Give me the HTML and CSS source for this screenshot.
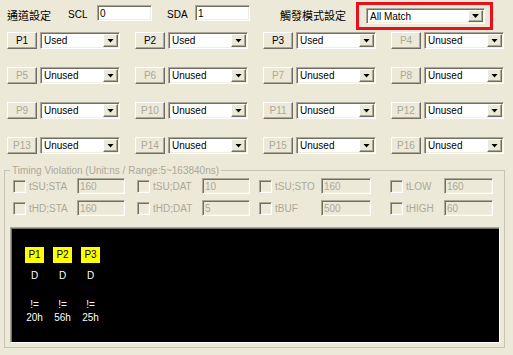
FILE: index.html
```html
<!DOCTYPE html>
<html lang="zh-Hant">
<head>
    <meta charset="UTF-8">
    <title>I2C 觸發設定</title>
    <link rel="stylesheet" href="styles.css">
</head>
<body>
<div class="dlg">
    <!-- ligne du haut : canaux + mode -->
    <div class="top-row">
        <span class="lbl cjk chan-lbl">通道設定</span>
        <span class="lbl scl-lbl">SCL</span>
        <input class="txt" type="text" value="0">
        <span class="lbl sda-lbl">SDA</span>
        <input class="txt" type="text" value="1">
        <span class="lbl cjk mode-lbl">觸發模式設定</span>
        <div class="hilite">
            <div class="combo wide"><span class="val">All Match</span><span class="drop"><i class="tri"></i></span></div>
        </div>
    </div>

    <div class="ports">
        <div class="port"><button class="btn">P1</button><div class="combo"><span class="val">Used</span><span class="drop"><i class="tri"></i></span></div></div>
        <div class="port"><button class="btn">P2</button><div class="combo"><span class="val">Used</span><span class="drop"><i class="tri"></i></span></div></div>
        <div class="port"><button class="btn">P3</button><div class="combo"><span class="val">Used</span><span class="drop"><i class="tri"></i></span></div></div>
        <div class="port"><button class="btn" disabled>P4</button><div class="combo"><span class="val">Unused</span><span class="drop"><i class="tri"></i></span></div></div>
        <div class="port"><button class="btn" disabled>P5</button><div class="combo"><span class="val">Unused</span><span class="drop"><i class="tri"></i></span></div></div>
        <div class="port"><button class="btn" disabled>P6</button><div class="combo"><span class="val">Unused</span><span class="drop"><i class="tri"></i></span></div></div>
        <div class="port"><button class="btn" disabled>P7</button><div class="combo"><span class="val">Unused</span><span class="drop"><i class="tri"></i></span></div></div>
        <div class="port"><button class="btn" disabled>P8</button><div class="combo"><span class="val">Unused</span><span class="drop"><i class="tri"></i></span></div></div>
        <div class="port"><button class="btn" disabled>P9</button><div class="combo"><span class="val">Unused</span><span class="drop"><i class="tri"></i></span></div></div>
        <div class="port"><button class="btn" disabled>P10</button><div class="combo"><span class="val">Unused</span><span class="drop"><i class="tri"></i></span></div></div>
        <div class="port"><button class="btn" disabled>P11</button><div class="combo"><span class="val">Unused</span><span class="drop"><i class="tri"></i></span></div></div>
        <div class="port"><button class="btn" disabled>P12</button><div class="combo"><span class="val">Unused</span><span class="drop"><i class="tri"></i></span></div></div>
        <div class="port"><button class="btn" disabled>P13</button><div class="combo"><span class="val">Unused</span><span class="drop"><i class="tri"></i></span></div></div>
        <div class="port"><button class="btn" disabled>P14</button><div class="combo"><span class="val">Unused</span><span class="drop"><i class="tri"></i></span></div></div>
        <div class="port"><button class="btn" disabled>P15</button><div class="combo"><span class="val">Unused</span><span class="drop"><i class="tri"></i></span></div></div>
        <div class="port"><button class="btn" disabled>P16</button><div class="combo"><span class="val">Unused</span><span class="drop"><i class="tri"></i></span></div></div>
    </div>

    <fieldset class="group">
        <legend>Timing Violation (Unit:ns / Range:5~163840ns)</legend>
        <div class="checks">
            <div class="chk-cell col-a"><span class="chk"></span><span class="chk-lbl">tSU;STA</span><input class="txt off" type="text" value="160" disabled></div>
            <div class="chk-cell col-b"><span class="chk"></span><span class="chk-lbl">tSU;DAT</span><input class="txt off" type="text" value="10" disabled></div>
            <div class="chk-cell col-c"><span class="chk"></span><span class="chk-lbl">tSU;STO</span><input class="txt off" type="text" value="160" disabled></div>
            <div class="chk-cell col-d"><span class="chk"></span><span class="chk-lbl">tLOW</span><input class="txt off" type="text" value="160" disabled></div>
            <div class="chk-cell col-a"><span class="chk"></span><span class="chk-lbl">tHD;STA</span><input class="txt off" type="text" value="160" disabled></div>
            <div class="chk-cell col-b"><span class="chk"></span><span class="chk-lbl">tHD;DAT</span><input class="txt off" type="text" value="5" disabled></div>
            <div class="chk-cell col-c"><span class="chk"></span><span class="chk-lbl">tBUF</span><input class="txt off" type="text" value="500" disabled></div>
            <div class="chk-cell col-d"><span class="chk"></span><span class="chk-lbl">tHIGH</span><input class="txt off" type="text" value="60" disabled></div>
        </div>

        <!-- apercu de la condition -->
        <div class="preview">
            <div class="sig"><span class="tag">P1</span><span class="sig-d">D</span><span class="sig-op">!=</span><span class="sig-val">20h</span></div>
            <div class="sig"><span class="tag">P2</span><span class="sig-d">D</span><span class="sig-op">!=</span><span class="sig-val">56h</span></div>
            <div class="sig"><span class="tag">P3</span><span class="sig-d">D</span><span class="sig-op">!=</span><span class="sig-val">25h</span></div>
        </div>
    </fieldset>
</div>
</body>
</html>
```

FILE: styles.css
```css
* {
    box-sizing: border-box;
}
body {
    margin: 0;
    background-color: #ece9d8;
    font-family: "Liberation Sans", Tahoma, sans-serif;
    font-size: 10px;
    color: #000;
}
.dlg {
    width: 513px;
    height: 355px;
}
.cjk {
    font-family: "Noto Sans CJK TC", "Liberation Sans", sans-serif;
    font-size: 11px;
}
.top-row {
    display: flex;
    align-items: flex-start;
    height: 32px;
    padding: 2px 0 0 7px;
}
.lbl {
    line-height: 16px;
    margin-top: 5px;
}
.chan-lbl { width: 61px; }
.scl-lbl { width: 29px; }
.sda-lbl { width: 28px; margin-left: 15px; }
.mode-lbl { width: 76px; margin-left: 30px; }

.txt {
    width: 55px;
    height: 16px;
    margin: 3px 0 0;
    padding: 0 2px;
    font-family: "Liberation Sans", Tahoma, sans-serif;
    font-size: 10px;
    color: #000;
    background-color: #fff;
    border: 1px solid;
    border-color: #aca899 #fff #fff #aca899;
    box-shadow: inset 1px 1px 0 #716f64, inset -1px -1px 0 #f1efe2;
    outline: none;
}
.txt.off {
    width: 48px;
    margin: 0;
    color: #aca899;
    background-color: #ece9d8;
}

.hilite {
    width: 137px;
    height: 28px;
    border: 3px solid #e8101a;
    padding: 3px 5px 3px 7px;
}
.combo {
    display: flex;
    align-items: center;
    width: 80px;
    height: 17px;
    background-color: #fff;
    border: 1px solid;
    border-color: #aca899 #fff #fff #aca899;
    box-shadow: inset 1px 1px 0 #716f64, inset -1px -1px 0 #f1efe2;
    padding: 1px;
}
.combo.wide {
    width: 119px;
    height: 16px;
}
.val {
    flex: 1;
    padding-left: 2px;
    line-height: 13px;
    white-space: nowrap;
    overflow: hidden;
}
.drop {
    width: 15px;
    height: 100%;
    display: flex;
    align-items: center;
    justify-content: center;
    background-color: #ece9d8;
    border: 1px solid;
    border-color: #fff #716f64 #716f64 #fff;
    box-shadow: inset -1px -1px 0 #aca899;
}
.tri {
    display: block;
    width: 7px;
    height: 4px;
    background-color: #000;
    clip-path: polygon(0 0, 100% 0, 50% 100%);
}

.ports {
    display: grid;
    grid-template-columns: repeat(4, 113px);
    column-gap: 15px;
    row-gap: 18px;
    padding-left: 7px;
}
.port {
    display: flex;
    gap: 3px;
}
.btn {
    width: 30px;
    height: 17px;
    padding: 0;
    font: inherit;
    color: #000;
    background-color: #ece9d8;
    border: 1px solid;
    border-color: #fff #716f64 #716f64 #fff;
    box-shadow: inset -1px -1px 0 #aca899;
}
.btn:disabled {
    color: #aca899;
}

.group {
    width: 501px;
    margin: 10px 0 0 4px;
    padding: 0 0 4px;
    border: 1px solid #c6c3b4;
}
.group legend {
    margin-left: 5px;
    padding: 0 2px;
    line-height: 13px;
    color: #aca899;
}
.checks {
    display: grid;
    grid-template-columns: 124px 122px 131px 110px;
    row-gap: 6px;
    margin-top: 1px;
    padding-left: 8px;
}
.chk-cell {
    display: flex;
    align-items: center;
    height: 16px;
}
.chk {
    width: 13px;
    height: 13px;
    margin-right: 3px;
    border: 1px solid;
    border-color: #aca899 #fff #fff #aca899;
    box-shadow: inset 1px 1px 0 #716f64, inset -1px -1px 0 #f1efe2;
}
.chk-lbl {
    color: #aca899;
    width: 48px;
}
.col-b .chk-lbl { width: 49px; }
.col-c .chk-lbl { width: 46px; }
.col-c .txt.off { width: 50px; }
.col-d .chk-lbl { width: 38px; }
.col-d .txt.off { width: 49px; }

.preview {
    display: flex;
    gap: 9px;
    height: 116px;
    margin: 11px 4px 0 5px;
    padding: 19px 0 0 14px;
    background-color: #000;
    border: 1px solid;
    border-color: #aca899 #fff #fff #aca899;
    box-shadow: inset 1px 1px 0 #716f64;
    color: #fff;
}
.sig {
    display: flex;
    flex-direction: column;
    align-items: center;
    width: 19px;
}
.tag {
    width: 19px;
    height: 16px;
    line-height: 16px;
    text-align: center;
    background-color: #ffff00;
    color: #000;
}
.sig-d {
    margin-top: 6px;
    line-height: 13px;
}
.sig-op {
    margin-top: 16px;
    line-height: 13px;
}
.sig-val {
    line-height: 13px;
}
```
